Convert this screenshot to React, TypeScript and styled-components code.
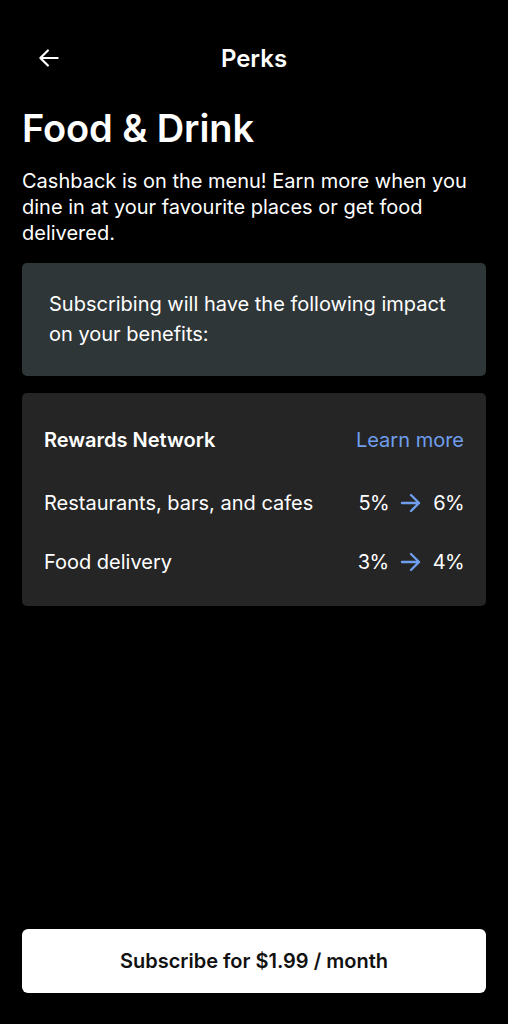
import * as React from 'react';
import styled, { createGlobalStyle } from 'styled-components';

const GlobalStyle = createGlobalStyle`
  html, body {
    margin: 0;
    padding: 0;
    background: #000;
  }
  body {
    font-family: Inter, 'Noto Sans', sans-serif;
    color: #fff;
  }
`;

const Screen = styled.div`
  width: 508px;
  height: 1024px;
  background: #000;
  display: flex;
  flex-direction: column;
  box-sizing: border-box;
  padding: 28px 22px 31px;
`;

const TopBar = styled.header`
  height: 60px;
  display: grid;
  grid-template-columns: 60px 1fr 60px;
  align-items: center;
`;

const BackButton = styled.button`
  background: none;
  border: 0;
  padding: 0 0 0 14px;
  color: #fff;
  display: flex;
  align-items: center;
  cursor: pointer;

  svg {
    width: 26px;
    height: 26px;
  }
`;

const Title = styled.h1`
  margin: 0;
  text-align: center;
  font-size: 24px;
  font-weight: 600;
`;

const Heading = styled.h2`
  margin: 18px 0 0;
  font-size: 38px;
  font-weight: 600;
  letter-spacing: -0.1px;
  line-height: 44px;
`;

const Intro = styled.p`
  margin: 18px 0 0;
  font-size: 20px;
  line-height: 26px;
  font-weight: 400;
`;

const NoticeCard = styled.div`
  margin-top: 17px;
  background: #2f3638;
  border-radius: 5px;
  padding: 26px 27px 27px;
  font-size: 20px;
  line-height: 30px;
`;

const BenefitsCard = styled.div`
  margin-top: 17px;
  background: #252525;
  border-radius: 5px;
  padding: 17px 22px 15px;
`;

const Row = styled.div<{ $spaced?: boolean }>`
  display: flex;
  justify-content: space-between;
  align-items: center;
  height: 59px;
  margin-bottom: ${props => (props.$spaced ? '4px' : '0')};
  font-size: 20px;
`;

const SectionLabel = styled.span`
  font-weight: 600;
`;

const LinkText = styled.a`
  color: #6f9eec;
  text-decoration: none;
`;

const Rate = styled.span`
  display: flex;
  align-items: center;
  gap: 10px;
  letter-spacing: -0.6px;

  svg {
    width: 24px;
    height: 24px;
    color: #6f9eec;
  }
`;

const Spacer = styled.div`
  flex: 1;
`;

const SubscribeButton = styled.button`
  height: 64px;
  width: 100%;
  background: #fff;
  border: 0;
  border-radius: 6px;
  color: #111;
  font-family: Inter, 'Noto Sans', sans-serif;
  font-size: 20px;
  font-weight: 600;
  cursor: pointer;
`;

const ArrowLeft = () => (
  <svg viewBox="0 0 24 24" fill="none" stroke="currentColor" strokeWidth={2} strokeLinecap="round" strokeLinejoin="round">
    <path d="M20 12H4M11 5l-7 7 7 7" />
  </svg>
);

const ArrowRight = () => (
  <svg viewBox="0 0 24 24" fill="none" stroke="currentColor" strokeWidth={2.4} strokeLinecap="round" strokeLinejoin="round">
    <path d="M3 12h17M12 4l8 8-8 8" />
  </svg>
);

const rates = [
  { label: 'Restaurants, bars, and cafes', from: '5%', to: '6%' },
  { label: 'Food delivery', from: '3%', to: '4%' },
];

const App: React.FC = () => {
  return (
    <>
      <GlobalStyle />
      <Screen>
        <TopBar>
          <BackButton aria-label="Back">
            <ArrowLeft />
          </BackButton>
          <Title>Perks</Title>
          <span />
        </TopBar>
        <Heading>Food &amp; Drink</Heading>
        <Intro>
          Cashback is on the menu! Earn more when you dine in at your favourite places or get food delivered.
        </Intro>
        <NoticeCard>Subscribing will have the following impact on your benefits:</NoticeCard>
        <BenefitsCard>
          <Row $spaced>
            <SectionLabel>Rewards Network</SectionLabel>
            <LinkText href="#">Learn more</LinkText>
          </Row>
          {rates.map(r => (
            <Row key={r.label}>
              <span>{r.label}</span>
              <Rate>
                {r.from}
                <ArrowRight />
                {r.to}
              </Rate>
            </Row>
          ))}
        </BenefitsCard>
        <Spacer />
        <SubscribeButton>Subscribe for $1.99 / month</SubscribeButton>
      </Screen>
    </>
  );
};

export default App;
